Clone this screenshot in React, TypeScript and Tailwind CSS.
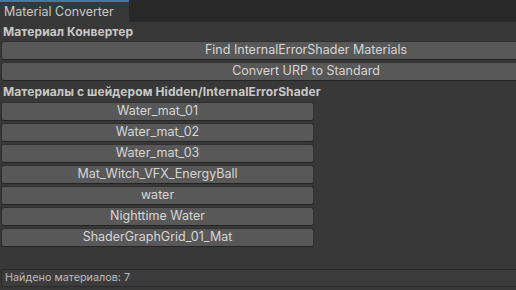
import React from 'react';

const materials = [
    'Water_mat_01',
    'Water_mat_02',
    'Water_mat_03',
    'Mat_Witch_VFX_EnergyBall',
    'water',
    'Nighttime Water',
    'ShaderGraphGrid_01_Mat',
];

const Btn: React.FC<{ label: string; className?: string }> = ({ label, className }) => (
    <div
        className={
            'h-[19px] shrink-0 flex items-center justify-center rounded-[3px] bg-[#585858] border border-[#303030] border-b-[#242424] text-[12.5px] text-[#d6d6d6] leading-none whitespace-nowrap ' +
            (className ?? '')
        }
    >
        {label}
    </div>
);

export default function App() {
    return (
        <div className="w-[516px] h-[290px] flex flex-col bg-[#383838] overflow-hidden" style={{ fontFamily: 'Inter, "Noto Sans", sans-serif' }}>
            {/* Tab strip */}
            <div className="h-[22px] flex bg-[#282828] shrink-0">
                <div className="w-[129px] h-full bg-[#383838] border-t-2 border-[#3a79bb] flex items-center pl-[4px] text-[12.5px] text-[#c8c8c8]">
                    Material Converter
                </div>
            </div>

            {/* window content is wider than the visible area, so it clips on the right */}
            <div className="flex-1 flex flex-col pl-[1px] w-[611px]">
                <div className="h-[19px] flex items-center pl-[2px] text-[12px] font-bold text-[#c8c8c8] tracking-[0.1px]">Материал Конвертер</div>
                <Btn label="Find InternalErrorShader Materials" />
                <Btn label="Convert URP to Standard" className="mt-[2px]" />
                <div className="h-[21px] flex items-center pl-[2px] text-[12px] font-bold text-[#c8c8c8] whitespace-nowrap tracking-[0.1px]">
                    Материалы с шейдером Hidden/InternalErrorShader
                </div>
                <div className="w-[313px] flex flex-col gap-[2px]">
                    {materials.map((m) => (
                        <Btn key={m} label={m} />
                    ))}
                </div>

                {/* Status */}
                <div className="mt-auto mb-[3px] h-[18px] flex items-center pl-[3px] rounded-[2px] bg-[#3c3c3c] border border-[#2a2a2a] text-[10.8px] text-[#bdbdbd]">
                    Найдено материалов: 7
                </div>
            </div>
        </div>
    );
}
